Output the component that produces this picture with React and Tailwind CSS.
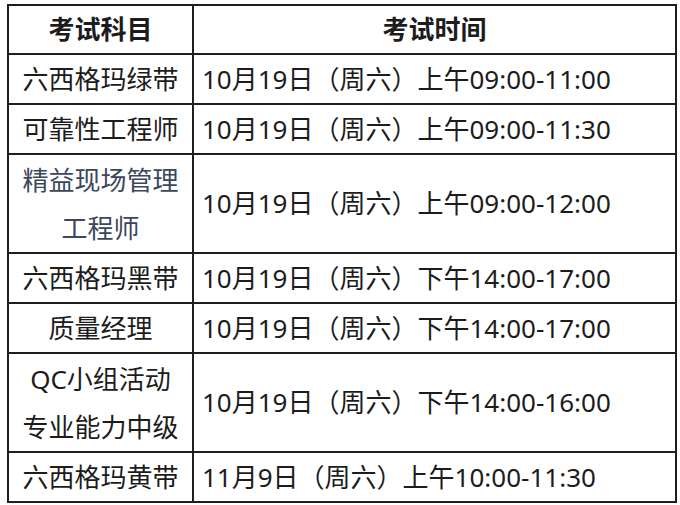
const rows = [
  { name: ['六西格玛绿带'], time: '10月19日（周六）上午09:00-11:00', h: 'h-[50px]' },
  { name: ['可靠性工程师'], time: '10月19日（周六）上午09:00-11:30', h: 'h-[50px]' },
  { name: ['精益现场管理', '工程师'], time: '10月19日（周六）上午09:00-12:00', h: 'h-[99px]', blue: true },
  { name: ['六西格玛黑带'], time: '10月19日（周六）下午14:00-17:00', h: 'h-[49px]' },
  { name: ['质量经理'], time: '10月19日（周六）下午14:00-17:00', h: 'h-[50px]' },
  { name: ['QC小组活动', '专业能力中级'], time: '10月19日（周六）下午14:00-16:00', h: 'h-[99px]' },
  { name: ['六西格玛黄带'], time: '11月9日（周六）上午10:00-11:30', h: 'h-[49px]' },
];

export default function App() {
  return (
    <div className="w-[680px] h-[505px] bg-white pt-[4px] pl-[7px] font-['Noto_Sans','Noto_Sans_CJK_SC',sans-serif] text-[26px] text-[#1c1c1c]">
      <table className="border-collapse table-fixed w-[670px]">
        <colgroup>
          <col className="w-[185px]" />
          <col />
        </colgroup>
        <thead>
          <tr className="h-[49px]">
            <th className="border-2 border-[#1e1e1e] font-bold text-center p-0">考试科目</th>
            <th className="border-2 border-[#1e1e1e] font-bold text-center p-0">考试时间</th>
          </tr>
        </thead>
        <tbody>
          {rows.map((r, i) => (
            <tr key={i} className={r.h}>
              <td className={`border-2 border-[#1e1e1e] text-center p-0 leading-[48px] ${r.blue ? 'text-[#3b475c]' : ''}`}>
                {r.name.map((n, j) => (
                  <div key={j}>{n}</div>
                ))}
              </td>
              <td className="border-2 border-[#1e1e1e] pl-[8px] pr-0 py-0 whitespace-nowrap">{r.time}</td>
            </tr>
          ))}
        </tbody>
      </table>
    </div>
  );
}
